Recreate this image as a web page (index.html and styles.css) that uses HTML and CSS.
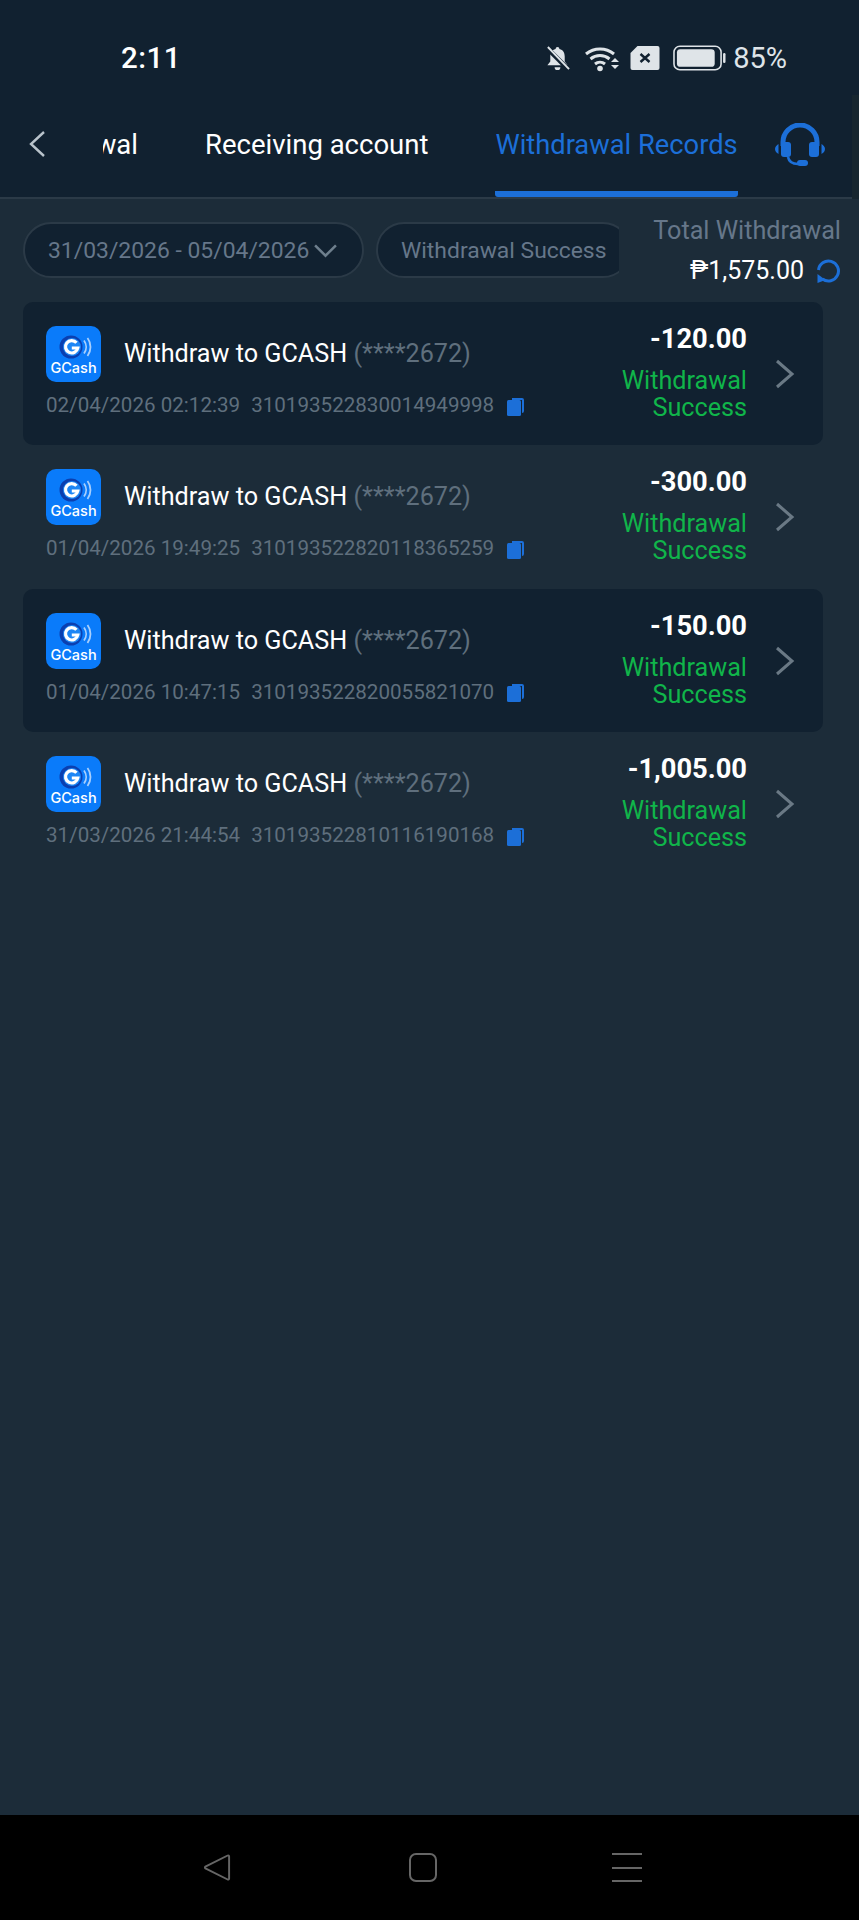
FILE: index.html
```html
<!DOCTYPE html>
<html lang="en">
<head>
    <meta charset="UTF-8">
    <meta name="viewport" content="width=device-width, initial-scale=1.0">
    <title>Withdrawal Records</title>
    <link rel="stylesheet" href="styles.css">
</head>
<body>
    <svg class="icon-defs" width="0" height="0">
        <defs>
            <symbol id="gcash" viewBox="0 0 55 56">
                <rect width="55" height="56" rx="10" fill="#0a7bfa"/>
                <circle cx="25" cy="21" r="11.500" fill="#0b3fb0"/>
                <circle cx="26" cy="21" r="9" fill="#1d86f5"/>
                <path d="M30.500 16.800a6.200 6.200 0 1 0 1.300 5.200h-6" fill="none" stroke="#fff" stroke-width="3.200"/>
                <path d="M38 14.500a11 11 0 0 1 0 13M41.500 12a15 15 0 0 1 0 18" fill="none" stroke="#a9cffc" stroke-width="1.800"/>
                <text x="27.500" y="47" class="gcash-word">GCash</text>
            </symbol>
            <symbol id="copy" viewBox="0 0 17 18">
                <path d="M5 0h10a2 2 0 0 1 2 2v11a2 2 0 0 1-2 2V2H5z" fill="#1c6fd8"/>
                <rect y="2" width="14" height="16" rx="1.500" fill="#1c6fd8"/>
            </symbol>
            <symbol id="chevron" viewBox="0 0 20 30">
                <path d="M2 2l15 13L2 28" fill="none" stroke="#6a7985" stroke-width="3"/>
            </symbol>
        </defs>
    </svg>

    <div class="page">
        <header class="header">
            <div class="statusbar">
                <span class="clock">2:11</span>
                <div class="status-icons">
                    <svg class="ic-bell" viewBox="0 0 26 28"><path d="M13 2a2 2 0 0 1 2 2c4 1 5.500 4 5.500 8v5l3 4H2.500l3-4v-5c0-4 1.500-7 5.500-8a2 2 0 0 1 2-2zM10 23h6a3 3 0 0 1-6 0z" fill="#dfe4e8"/><path d="M2 3l22 22" stroke="#112130" stroke-width="5"/><path d="M3 2l22 23" stroke="#dfe4e8" stroke-width="2"/></svg>
                    <svg class="ic-wifi" viewBox="0 0 36 28"><path d="M2 10a22 22 0 0 1 28 0M6.500 15a15 15 0 0 1 19 0M11 20a8 8 0 0 1 10 0" fill="none" stroke="#dfe4e8" stroke-width="3"/><circle cx="16" cy="24.500" r="2.800" fill="#dfe4e8"/><path d="M27 18h8l-4-4zM27 21h8l-4 4z" fill="#dfe4e8"/></svg>
                    <svg class="ic-sim" viewBox="0 0 29 24"><path d="M7 0h20a2 2 0 0 1 2 2v20a2 2 0 0 1-2 2H2a2 2 0 0 1-2-2V7z" fill="#dfe4e8"/><path d="M10 8l9 8M19 8l-9 8" stroke="#112130" stroke-width="2.400"/></svg>
                    <svg class="ic-battery" viewBox="0 0 54 26"><rect x="1" y="1" width="48" height="24" rx="6" fill="none" stroke="#dfe4e8" stroke-width="1.600"/><rect x="4" y="4" width="38.500" height="18" rx="3.500" fill="#dfe4e8"/><rect x="51" y="8" width="2.500" height="10" rx="1.200" fill="#dfe4e8"/></svg>
                    <span class="battery-pct">85%</span>
                </div>
            </div>
            <nav class="navbar">
                <svg class="nav-back" viewBox="0 0 18 28"><path d="M16 2L3 14l13 12" fill="none" stroke="#b9c3cb" stroke-width="2.400"/></svg>
                <div class="tabs">
                    <span class="tab tab-clipped">wal</span>
                    <span class="tab">Receiving account</span>
                    <span class="tab tab-active">Withdrawal Records</span>
                </div>
                <svg class="nav-support" viewBox="0 0 50 44"><path d="M8 23V19a17 17 0 0 1 34 0v4" fill="none" stroke="#1c6fd8" stroke-width="5"/><rect x="6" y="19" width="10" height="15" rx="3" fill="#1c6fd8"/><rect x="34" y="19" width="10" height="15" rx="3" fill="#1c6fd8"/><path d="M3.500 21v10C1.500 30 0 28 0 26s1.500-4 3.500-5zM46.500 21v10c2-1 3.500-3 3.500-5s-1.500-4-3.500-5z" fill="#1c6fd8"/><path d="M13 34c1 5 4 7 10 7" fill="none" stroke="#1c6fd8" stroke-width="2.600"/><rect x="22" y="37" width="11" height="6" rx="3" fill="#1c6fd8"/></svg>
            </nav>
        </header>

        <div class="filters">
            <div class="pill pill-date">
                <span>31/03/2026 - 05/04/2026</span>
                <svg class="pill-arrow" viewBox="0 0 24 14"><path d="M2 2l10 10L22 2" fill="none" stroke="#6e7f8d" stroke-width="2.400"/></svg>
            </div>
            <div class="pill pill-status">Withdrawal Success</div>
            <div class="total">
                <div class="total-label">Total Withdrawal</div>
                <div class="total-amount">
                    <span>₱1,575.00</span>
                    <svg class="total-refresh" viewBox="0 0 26 26"><path d="M3.500 12a10 10 0 1 1 4 9" fill="none" stroke="#1c6fd8" stroke-width="3"/><path d="M2.500 16l8 6-8 3z" fill="#1c6fd8"/></svg>
                </div>
            </div>
        </div>

        <ul class="records">
            <li class="record record-dark">
                <svg class="record-logo"><use href="#gcash"/></svg>
                <div class="record-main">
                    <div class="record-title">Withdraw to GCASH <span class="record-acct">(****2672)</span></div>
                    <div class="record-meta"><span>02/04/2026 02:12:39</span><span>310193522830014949998</span><svg class="record-copy"><use href="#copy"/></svg></div>
                </div>
                <div class="record-side">
                    <div class="record-amount">-120.00</div>
                    <div class="record-status">Withdrawal<br>Success</div>
                </div>
                <svg class="record-chevron"><use href="#chevron"/></svg>
            </li>
            <li class="record">
                <svg class="record-logo"><use href="#gcash"/></svg>
                <div class="record-main">
                    <div class="record-title">Withdraw to GCASH <span class="record-acct">(****2672)</span></div>
                    <div class="record-meta"><span>01/04/2026 19:49:25</span><span>310193522820118365259</span><svg class="record-copy"><use href="#copy"/></svg></div>
                </div>
                <div class="record-side">
                    <div class="record-amount">-300.00</div>
                    <div class="record-status">Withdrawal<br>Success</div>
                </div>
                <svg class="record-chevron"><use href="#chevron"/></svg>
            </li>
            <li class="record record-dark">
                <svg class="record-logo"><use href="#gcash"/></svg>
                <div class="record-main">
                    <div class="record-title">Withdraw to GCASH <span class="record-acct">(****2672)</span></div>
                    <div class="record-meta"><span>01/04/2026 10:47:15</span><span>310193522820055821070</span><svg class="record-copy"><use href="#copy"/></svg></div>
                </div>
                <div class="record-side">
                    <div class="record-amount">-150.00</div>
                    <div class="record-status">Withdrawal<br>Success</div>
                </div>
                <svg class="record-chevron"><use href="#chevron"/></svg>
            </li>
            <li class="record">
                <svg class="record-logo"><use href="#gcash"/></svg>
                <div class="record-main">
                    <div class="record-title">Withdraw to GCASH <span class="record-acct">(****2672)</span></div>
                    <div class="record-meta"><span>31/03/2026 21:44:54</span><span>310193522810116190168</span><svg class="record-copy"><use href="#copy"/></svg></div>
                </div>
                <div class="record-side">
                    <div class="record-amount">-1,005.00</div>
                    <div class="record-status">Withdrawal<br>Success</div>
                </div>
                <svg class="record-chevron"><use href="#chevron"/></svg>
            </li>
        </ul>

        <footer class="sysnav">
            <svg class="sysnav-back" viewBox="0 0 30 30"><path d="M27 3.500v23a1 1 0 0 1-1.500.9L2.500 16a1.200 1.200 0 0 1 0-2L25.500 2.600a1 1 0 0 1 1.500.9z" fill="none" stroke="#666" stroke-width="2"/></svg>
            <div class="sysnav-home"></div>
            <div class="sysnav-menu"><i></i><i></i><i></i></div>
        </footer>
    </div>
</body>
</html>
```

FILE: styles.css
```css
* {
    box-sizing: border-box;
}

body {
    margin: 0;
    background: #1c2c39;
    font-family: Roboto, "Liberation Sans", sans-serif;
}

.icon-defs {
    position: absolute;
}

.page {
    display: flex;
    flex-direction: column;
    height: 1920px;
    overflow: hidden;
}

/* header */
.header {
    position: relative;
    height: 199px;
    flex-shrink: 0;
    background: #112130;
    border-bottom: 2px solid #2b3a47;
}
.header::after {
    content: "";
    position: absolute;
    top: 95px;
    right: 0;
    bottom: -2px;
    width: 7px;
    background: #17262f;
}

.statusbar {
    display: flex;
    justify-content: space-between;
    align-items: center;
    height: 88px;
    padding: 28px 72px 0 121px;
}
.clock {
    color: #fff;
    font-size: 29.500px;
    font-weight: 500;
    letter-spacing: .5px;
}
.status-icons {
    display: flex;
    align-items: center;
}
.ic-bell {
    width: 25px;
    height: 27px;
    margin-right: 14px;
}
.ic-wifi {
    width: 36px;
    height: 28px;
    margin-right: 10px;
}
.ic-sim {
    width: 30px;
    height: 24px;
    margin-right: 13px;
}
.ic-battery {
    width: 53px;
    height: 26px;
    margin-right: 7px;
}
.battery-pct {
    color: #dfe4e8;
    font-size: 29px;
}

.navbar {
    display: flex;
    align-items: center;
    height: 109px;
    padding-left: 28px;
}
.nav-back {
    width: 18px;
    height: 28px;
    margin-top: 2px;
    flex-shrink: 0;
}
.tabs {
    display: flex;
    height: 100%;
    margin-left: 57px;
}
.tab {
    display: flex;
    align-items: center;
    padding-top: 4px;
    margin-right: 68px;
    color: #fff;
    font-size: 27.500px;
    white-space: nowrap;
}
.tab-clipped {
    width: 35px;
    margin-right: 67px;
    overflow: hidden;
    justify-content: flex-end;
}
.tab-active {
    padding-top: 10px;
    margin: 0 0 0 -1px;
    color: #1c6fd8;
    font-size: 27.300px;
    border-bottom: 6px solid #1c6fd8;
    border-radius: 0 0 3px 3px;
}
.nav-support {
    width: 50px;
    height: 44px;
    margin: 4px 0 0 37px;
    flex-shrink: 0;
}

/* filters */
.filters {
    position: relative;
    display: flex;
    gap: 12px;
    height: 103px;
    padding: 23px 0 0 23px;
    flex-shrink: 0;
}
.pill {
    display: flex;
    align-items: center;
    flex-shrink: 0;
    height: 56px;
    padding: 0 23px;
    color: #66778a;
    background: #112130;
    border: 2px solid #2b3a47;
    border-radius: 28px;
    font-size: 22.900px;
    white-space: nowrap;
}
.pill-date {
    width: 341px;
}
.pill-arrow {
    width: 25px;
    height: 15px;
    margin-left: 4px;
    flex-shrink: 0;
}
.total {
    position: absolute;
    top: 0;
    right: 0;
    width: 240px;
    height: 103px;
    padding: 17px 18px 0 0;
    background: #1c2c39;
    text-align: right;
}
.total-label {
    color: #66778a;
    font-size: 25.200px;
}
.total-amount {
    display: flex;
    justify-content: flex-end;
    align-items: center;
    gap: 11px;
    margin-top: 11px;
    color: #fff;
    font-size: 25px;
}
.total-refresh {
    width: 26px;
    height: 26px;
}

/* list */
.records {
    flex: 1;
    margin: 0;
    padding: 0 36px 0 23px;
    list-style: none;
}
.record {
    display: flex;
    height: 143.400px;
    padding: 24px 28px 0 23px;
    border-radius: 10px;
}
.record-dark {
    background: #112130;
}
.record-logo {
    width: 55px;
    height: 56px;
    flex-shrink: 0;
}
.gcash-word {
    fill: #fff;
    font-size: 14.500px;
    font-weight: 500;
    font-family: Inter, Roboto, sans-serif;
    text-anchor: middle;
}
.record-main {
    flex: 1;
    min-width: 0;
    margin-left: 23px;
    padding-top: 13px;
}
.record-title {
    color: #fff;
    font-size: 25.200px;
    white-space: nowrap;
}
.record-acct {
    color: #5f6f7d;
}
.record-meta {
    display: flex;
    align-items: center;
    gap: 11px;
    margin: 25px 0 0 -78px;
    color: #5f6f7d;
    font-size: 20.600px;
    white-space: nowrap;
}
.record-copy {
    width: 17px;
    height: 18px;
    margin: 3px 0 0 2px;
}
.record-side {
    margin-top: -3px;
    text-align: right;
}
.record-amount {
    color: #fff;
    font-size: 27.300px;
    font-weight: 700;
}
.record-status {
    margin-top: 12px;
    color: #10b54a;
    font-size: 25.200px;
    line-height: 27px;
}
.record-chevron {
    width: 20px;
    height: 30px;
    margin: 33px 0 0 28px;
    flex-shrink: 0;
}

/* android nav */
.sysnav {
    display: flex;
    align-items: center;
    height: 105px;
    flex-shrink: 0;
    background: #000;
    padding-left: 203px;
}
.sysnav-back {
    width: 29px;
    height: 29px;
}
.sysnav-home {
    width: 28px;
    height: 29px;
    margin-left: 177px;
    border: 2px solid #666;
    border-radius: 7px;
}
.sysnav-menu {
    display: flex;
    flex-direction: column;
    justify-content: space-between;
    width: 30px;
    height: 29px;
    margin-left: 175px;
}
.sysnav-menu i {
    display: block;
    height: 2px;
    background: #666;
}
```
